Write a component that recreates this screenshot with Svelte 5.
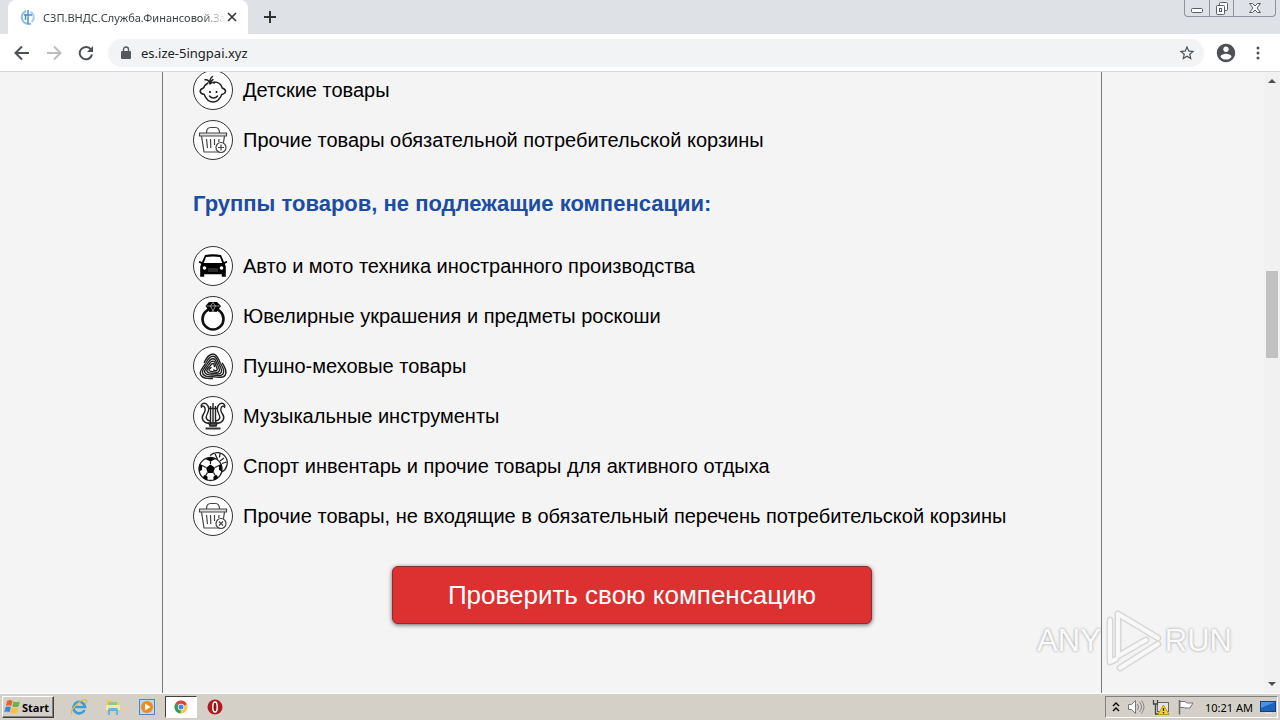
<script>
    let url = $state('es.ize-5ingpai.xyz');

    const included = [
        { icon: 'baby', label: 'Детские товары' },
        { icon: 'basket-plus', label: 'Прочие товары обязательной потребительской корзины' }
    ];

    const excluded = [
        { icon: 'car', label: 'Авто и мото техника иностранного производства' },
        { icon: 'ring', label: 'Ювелирные украшения и предметы роскоши' },
        { icon: 'wool', label: 'Пушно-меховые товары' },
        { icon: 'lyre', label: 'Музыкальные инструменты' },
        { icon: 'ball', label: 'Спорт инвентарь и прочие товары для активного отдыха' },
        { icon: 'basket-cross', label: 'Прочие товары, не входящие в обязательный перечень потребительской корзины' }
    ];

    // one third of the wool skein, repeated three times around the centre
    const turns = [0, 120, 240];
    const strands = [10.4, 8.7, 7, 5.3, 3.6].map(strand);

    function strand(r) {
        const end = r - 1.7;
        const top = 22.5 - r * 1.4;
        const x1 = 20 - 0.87 * r;
        const y1 = 22 - 0.5 * r;
        const x2 = 20 + 0.87 * end;
        const y2 = 22 - 0.5 * end;
        const k = r * 0.45;
        return `M${x1} ${y1}C${x1 + k * 0.5} ${y1 - k * 0.87} ${20 - k} ${top} 20 ${top}S${x2 - k * 0.5} ${y2 - k * 0.87} ${x2} ${y2}`;
    }
</script>

{#snippet goodsIcon(name)}
    <svg class="goods-icon" viewBox="0 0 40 40" aria-hidden="true">
        <circle cx="20" cy="20" r="19.5" fill="#fff" stroke="#333" />
        {#if name === 'baby'}
            <g fill="none" stroke="#222" stroke-width="1.5" stroke-linecap="round">
                <path d="M15 13c-2.5 1.5-4 3-4.500 5-1.500.5-3.500 2-3.300 3.500.3 1.500 2 2.500 4 3 1.800 4.500 4.800 7.500 8.800 7.500s7-3 8.800-7.500c2-.5 3.500-1.500 3.700-3 .2-1.500-1.800-3-3.300-3.500-1-4-4.500-6-8.200-6" />
                <path d="M17 14c-.5-3-2-4.500-5-4.200M17 14c-.5-3 .5-6 2.500-7.500M17 14c.5-2.500 1-3.500 3-4.500M17.500 13.500c1-1 3-1 4-.5" />
                <path d="M16.500 26c2 2.600 6 2.600 8 0" />
            </g>
            <circle cx="17" cy="22" r="1" />
            <circle cx="23.5" cy="22" r="1" />
        {:else if name === 'car'}
            <path d="M12 9q8-1.500 16 0l3 7 2.500-1q1.500 1 0 2l-1.700.7 1 3v10h-4v-2.500H11.200v2.500h-4v-10l1-3-1.700-.7q-1.500-1 0-2L9 16z" />
            <path d="M13 11q7-1 14 0l2.300 6H10.700z" fill="#fff" />
            <circle cx="11.5" cy="22" r="1.8" fill="#fff" />
            <circle cx="28.5" cy="22" r="1.8" fill="#fff" />
            <path d="M15 23h10M15 25h10" stroke="#555" />
        {:else if name === 'ring'}
            <circle cx="20" cy="23" r="10.5" fill="none" stroke="#111" stroke-width="2.6" />
            <path d="M16 6h8l4 4-4.500 6q-3.500-1-7 0L12.500 10z" />
            <path d="M13.500 10h13M17.500 10l2.500 5 2.500-5L20 6.500z" fill="none" stroke="#ccc" stroke-width=".7" />
        {:else if name === 'wool'}
            {#each turns as turn}
                <g transform="rotate({turn} 20 22)" fill="none" stroke="#222" stroke-width="1.4">
                    {#each strands as d}
                        <path {d} />
                    {/each}
                </g>
            {/each}
        {:else if name === 'lyre'}
            <g fill="none" stroke="#222" stroke-width="1.4">
                <path d="M16 27.500c-6-1-8.500-5-5.500-9.500 2-3 2.300-5.500.5-7.500-1.500-1-3 0-2.500 1.500M24 27.500c6-1 8.500-5 5.500-9.500-2-3-2.300-5.500-.5-7.500 1.500-1 3 0 2.500 1.500" />
                <path d="M17 25c-3.500-.6-4.800-3.500-3-6.500 2.500-4.500 2.200-8-.5-10.500-3-1.700-5.500-.2-5.500 2.500M23 25c3.500-.6 4.800-3.500 3-6.500-2.500-4.500-2.200-8 .5-10.500 3-1.700 5.500-.2 5.500 2.500" />
                <path d="M15 12.500h10M17.500 10v17M20 7v20M22.500 10v17" />
                <path d="M16 27h8l-1 3h-6z" fill="#555" />
            </g>
            <path d="M12.500 31.500h15v2h-15z" fill="#333" />
        {:else if name === 'ball'}
            <g fill="none" stroke="#222" stroke-width="1.3">
                <path d="M17 9.500c5-4.500 12-3.500 15.500 1.500s1.500 12-3.500 15" />
                <path d="M22 8l2.500 5M27 7.500l-.5 4M31 12l-4 3M33.500 16l-4.500 1.500" />
                <circle cx="17.5" cy="23" r="11.5" fill="#fff" />
                <path d="M17.500 18v-4M13 21.500l-4-2M22 21.500l4-2M14.500 26.500l-2 3.500M20.500 26.500l2 3.500" />
            </g>
            <path d="M17.500 18.500l4.500 3.300-1.800 5.200h-5.400L13 21.800zM12.500 13l5-1.500 5 1.500-5 2.500zM6.500 18l2.700 1-.2 5-3 1.500zM28.500 18l-2.700 1 .2 5 3 1.500zM11 29l3.500 1.500v4L10 32zM24 29l-3.500 1.500v4L25 32z" />
        {:else}
            <g fill="none" stroke="#444" stroke-width="1.2" stroke-linejoin="round">
                <path d="M6.500 13h27v3h-27z" fill="#ddd" />
                <path d="M8.500 16l2.500 16h18l2.500-16" />
                <path d="M13.500 13c0-4 1-5.500 4-5.500h5c3 0 4 1.500 4 5.500" />
                <path d="M13.500 19l1 9M17.500 19l.3 9M21.500 19v6M26 19l-.3 3" />
                <circle cx="28" cy="27.5" r="5" fill="#fff" />
                {#if name === 'basket-plus'}
                    <path d="M28 24.500v6M25 27.500h6" />
                {:else}
                    <path d="M26 25.500l4 4M30 25.500l-4 4" />
                {/if}
            </g>
        {/if}
    </svg>
{/snippet}

{#snippet goodsList(items)}
    <ul class="goods">
        {#each items as item}
            <li>
                {@render goodsIcon(item.icon)}
                <span>{item.label}</span>
            </li>
        {/each}
    </ul>
{/snippet}

<div class="desktop">
    <header class="tabstrip">
        <div class="tab">
            <svg class="favicon" viewBox="0 0 16 16" aria-hidden="true">
                <path d="M6 2a6.500 6.500 0 1 0 5 12.500" fill="none" stroke="#8dbbe8" stroke-width="2" />
                <path d="M10.500 3a6 6 0 0 1 1 10" fill="none" stroke="#a9cdf0" stroke-width="2" />
                <path d="M8 1v14M5.500 5v6M4 6h8" stroke="#4a90d9" stroke-width="1.5" />
            </svg>
            <span class="tab-title">СЗП.ВНДС.Служба.Финансовой.За</span>
            <button class="tab-close" aria-label="Close tab">
                <svg width="10" height="10" viewBox="0 0 10 10"><path d="M1 1l8 8M9 1l-8 8" stroke="#333" stroke-width="1.6" /></svg>
            </button>
        </div>
        <button class="new-tab" aria-label="New tab">
            <svg width="12" height="12" viewBox="0 0 12 12"><path d="M6 0v12M0 6h12" stroke="#333" stroke-width="2" /></svg>
        </button>
        <div class="caption">
            <button aria-label="Minimize">
                <svg width="14" height="16" viewBox="0 0 14 16"><rect x="1.5" y="8.5" width="11" height="4" rx="1" fill="#fff" stroke="#5a5e68" /></svg>
            </button>
            <button aria-label="Restore">
                <svg width="14" height="16" viewBox="0 0 14 16" fill="#fff" stroke="#5a5e68"><rect x="4.5" y="2.5" width="8" height="8" rx="1" /><rect x="1.5" y="5.5" width="8" height="9" rx="1" /><rect x="4.5" y="8.5" width="2" height="3" /></svg>
            </button>
            <button class="wide" aria-label="Close">
                <svg width="14" height="16" viewBox="0 0 14 16"><path d="M1.500 3.500h3L7 6l2.500-2.500h3L9 8l3.500 4.500h-3L7 10l-2.500 2.500h-3L5 8z" fill="#fff" stroke="#5a5e68" /></svg>
            </button>
        </div>
    </header>

    <nav class="toolbar">
        <button aria-label="Back">
            <svg width="16" height="16" viewBox="0 0 16 16" fill="none" stroke="#4d5156" stroke-width="2"><path d="M15 8H2M8 1.500L1.500 8 8 14.500" /></svg>
        </button>
        <button aria-label="Forward" disabled>
            <svg width="16" height="16" viewBox="0 0 16 16" fill="none" stroke="#babcbe" stroke-width="2"><path d="M1 8h13M8 1.500L14.500 8 8 14.500" /></svg>
        </button>
        <button aria-label="Reload">
            <svg width="16" height="16" viewBox="0 0 16 16"><path d="M13 4.500A6.200 6.200 0 1 0 14 9.500" fill="none" stroke="#4d5156" stroke-width="2" /><path d="M15 1v6H9z" fill="#4d5156" /></svg>
        </button>
        <div class="omnibox">
            <svg width="10" height="14" viewBox="0 0 10 14" aria-hidden="true"><rect y="5" width="10" height="8" rx="1" fill="#55595e" /><path d="M2.500 5.500V3.500a2.500 2.500 0 0 1 5 0v2" fill="none" stroke="#55595e" stroke-width="1.4" /></svg>
            <input aria-label="Address" bind:value={url} />
            <button aria-label="Bookmark">
                <svg width="18" height="18" viewBox="0 0 24 24"><path d="M22 9.240l-7.190-.62L12 2 9.190 8.630 2 9.240l5.460 4.730L5.820 21 12 17.270 18.180 21l-1.630-7.030L22 9.240zM12 15.400l-3.760 2.270 1-4.280-3.320-2.880 4.380-.38L12 6.100l1.710 4.040 4.380.38-3.320 2.880 1 4.280L12 15.400z" fill="#4d5156" /></svg>
            </button>
        </div>
        <button aria-label="Profile">
            <svg width="22" height="22" viewBox="0 0 24 24"><path d="M12 2C6.480 2 2 6.480 2 12s4.480 10 10 10 10-4.480 10-10S17.520 2 12 2zm0 3c1.660 0 3 1.340 3 3s-1.340 3-3 3-3-1.340-3-3 1.340-3 3-3zm0 14.200c-2.500 0-4.710-1.280-6-3.220.03-1.990 4-3.080 6-3.080 1.990 0 5.970 1.090 6 3.080-1.290 1.940-3.500 3.220-6 3.220z" fill="#4d5156" /></svg>
        </button>
        <button aria-label="Menu">
            <svg width="4" height="14" viewBox="0 0 4 14" fill="#4d5156"><circle cx="2" cy="2" r="1.5" /><circle cx="2" cy="7" r="1.5" /><circle cx="2" cy="12" r="1.5" /></svg>
        </button>
    </nav>

    <div class="viewport">
        <main>
            {@render goodsList(included)}
            <h2>Группы товаров, не подлежащие компенсации:</h2>
            {@render goodsList(excluded)}
            <button class="check">Проверить свою компенсацию</button>
        </main>
        <div class="scrollbar">
            <svg width="8" height="4" viewBox="0 0 8 4" aria-hidden="true"><path d="M0 4l4-4 4 4z" fill="#505050" /></svg>
            <div class="track"><div class="thumb"></div></div>
            <svg width="8" height="4" viewBox="0 0 8 4" aria-hidden="true"><path d="M0 0l4 4 4-4z" fill="#505050" /></svg>
        </div>
        <div class="watermark">
            <span>ANY</span>
            <svg width="60" height="64" viewBox="0 0 60 64" fill="none" stroke-linejoin="round" stroke-linecap="round" aria-hidden="true">
                <path d="M7 11v42l6-3M15 5v42L43 31M15 5l40 24M17 59l38-24" stroke="#d8d8d8" stroke-width="7" />
                <path d="M7 11v42l6-3M15 5v42L43 31M15 5l40 24M17 59l38-24" stroke="#f8f8f8" stroke-width="4" />
            </svg>
            <span>RUN</span>
        </div>
    </div>

    <footer class="taskbar">
        <button class="start">
            <svg width="17" height="16" viewBox="0 0 16 14" aria-hidden="true">
                <path d="M3 1q3-1.500 5 .3L6.800 6.200Q4.500 4.800 1.800 6z" fill="#e8622c" />
                <path d="M9 1.800q3 1.200 6 0L13.800 6.600q-3 1-6 0z" fill="#6db33f" />
                <path d="M1.500 7q3-1 5 .3L5.300 12Q3 10.500.3 12z" fill="#3f83d6" />
                <path d="M7.500 7.800q3 1.200 6 0L12.300 12.500q-3 1.200-6 0z" fill="#f5c331" />
            </svg>
            Start
        </button>
        <div class="quick">
            <button aria-label="Internet Explorer">
                <svg width="18" height="18" viewBox="0 0 18 18" fill="none"><path d="M14.500 12A5.800 5.800 0 1 1 15 9H5" stroke="#37a0dc" stroke-width="2.6" /><path d="M2 16C-1 13 10 1 16 2q2 1-1 4" stroke="#e5b93a" stroke-width="1.3" /></svg>
            </button>
            <button aria-label="Explorer">
                <svg width="18" height="18" viewBox="0 0 18 18"><path d="M2 2h6l1 2h7v10H2z" fill="#e9cf6c" /><path d="M4 4h9v5H4z" fill="#8fc98b" /><path d="M2 7h14v5H2z" fill="#f7e9a5" /><path d="M4 17v-5q0-2 2-2h6q2 0 2 2v5h-2v-4H6v4z" fill="#69b4df" /></svg>
            </button>
            <button aria-label="Media Player">
                <svg width="18" height="18" viewBox="0 0 18 18"><rect x="1.5" y="1.5" width="15" height="15" fill="#b9d7f3" stroke="#4d87c7" /><circle cx="9" cy="9" r="6" fill="#f08a1c" /><path d="M7 5.500l5.500 3.500L7 12.500z" fill="#fff" /></svg>
            </button>
            <button class="active" aria-label="Chrome">
                <svg width="14" height="14" viewBox="0 0 14 14"><circle cx="7" cy="7" r="6.5" fill="#f6c944" /><path d="M7 7L1.300 3.800A6.500 6.500 0 0 1 12.900 4.200z" fill="#dc4437" /><path d="M7 7L1.300 3.800A6.500 6.500 0 0 0 6.500 13.500z" fill="#2f9e58" /><circle cx="7" cy="7" r="3.2" fill="#fff" /><circle cx="7" cy="7" r="2.5" fill="#4285f4" /></svg>
            </button>
            <button aria-label="Opera">
                <svg width="16" height="16" viewBox="0 0 16 16"><circle cx="8" cy="8" r="7.5" fill="#b3161b" /><ellipse cx="8" cy="8" rx="2.2" ry="5" fill="#8c1014" stroke="#fff" stroke-width="1.5" /></svg>
            </button>
        </div>
        <div class="tray">
            <svg width="8" height="10" viewBox="0 0 8 10" fill="none" stroke="#000" stroke-width="1.4" aria-hidden="true"><path d="M1 4l3-3 3 3M1 9l3-3 3 3" /></svg>
            <svg width="18" height="16" viewBox="0 0 18 16" aria-hidden="true"><path d="M1.500 5.500h3l4-4v13l-4-4h-3z" fill="#fff" stroke="#777" /><path d="M10.500 5q2 3 0 6M12.500 3q4 5 0 10M14.500 1.500q5 6.500 0 13" fill="none" stroke="#888" /></svg>
            <svg width="18" height="16" viewBox="0 0 18 16" aria-hidden="true"><rect x="5.5" y="3.5" width="11" height="9" fill="#e4e4e4" stroke="#666" /><path d="M1.500 1v4h4V1M3.500 5v10h4" fill="none" stroke="#444" stroke-width="1.3" /><path d="M11.500 6l5.500 9.500H6z" fill="#f6d420" stroke="#b79a10" /><path d="M11.500 9v3M11.500 13v1.500" stroke="#222" stroke-width="1.3" /></svg>
            <svg width="18" height="16" viewBox="0 0 18 16" aria-hidden="true"><path d="M2.500 1v14.500" stroke="#666" stroke-width="1.5" /><path d="M3 2.500h5l2 1.500h6l-3 5H8L7 8.500H3z" fill="#fff" stroke="#777" /></svg>
            <time>10:21 AM</time>
            <svg width="16" height="14" viewBox="0 0 16 14" aria-hidden="true"><rect x=".5" y="1.5" width="15" height="10" fill="#1d62bd" stroke="#17407a" /><path d="M1 2h14L1 8z" fill="#4b93e0" /><path d="M5 13h7" stroke="#ddd" stroke-width="2" /></svg>
        </div>
    </footer>
</div>

<style>
    :global(body) {
        margin: 0;
    }
    .desktop {
        display: flex;
        flex-direction: column;
        height: 100vh;
        overflow: hidden;
        font-family: "Liberation Sans", Arial, sans-serif;
        color: #000;
    }
    button {
        display: flex;
        align-items: center;
        justify-content: center;
        padding: 0;
        border: none;
        background: none;
        font-family: inherit;
        color: inherit;
        cursor: pointer;
    }
    svg {
        flex: none;
    }

    .tabstrip {
        display: flex;
        height: 34px;
        flex: none;
        padding: 0 4px 0 8px;
        background: #dee1e6;
    }
    .tab {
        display: flex;
        align-items: center;
        box-sizing: border-box;
        width: 240px;
        padding: 0 10px 0 12px;
        background: #fff;
        border-radius: 8px 8px 0 0;
    }
    .favicon {
        width: 16px;
        height: 16px;
        margin-right: 7px;
    }
    .tab-title {
        flex: 1;
        white-space: nowrap;
        font: 11px "Noto Sans", sans-serif;
        color: #3c4043;
        mask-image: linear-gradient(to left, transparent, #000 24px);
    }
    .tab-close {
        width: 12px;
        height: 16px;
    }
    .new-tab {
        width: 28px;
        margin-left: 8px;
    }
    .caption {
        display: flex;
        height: 16px;
        margin-left: auto;
        border: 1px solid #8d929c;
        border-top: none;
        border-radius: 0 0 4px 4px;
    }
    .caption button {
        width: 24px;
    }
    .caption button + button {
        border-left: 1px solid #8d929c;
    }
    .caption .wide {
        width: 42px;
    }

    .toolbar {
        display: flex;
        align-items: center;
        flex: none;
        height: 37px;
        padding: 0 6px;
        background: #fff;
        border-bottom: 1px solid #d5d7da;
    }
    .toolbar > button {
        width: 32px;
        height: 32px;
    }
    .omnibox {
        display: flex;
        align-items: center;
        flex: 1;
        height: 28px;
        margin: 0 6px;
        padding: 0 8px 0 13px;
        background: #f1f3f4;
        border-radius: 14px;
    }
    .omnibox input {
        flex: 1;
        min-width: 0;
        padding: 0 10px;
        border: none;
        outline: none;
        background: none;
        font: 13px "Noto Sans", sans-serif;
        color: #202124;
    }

    .viewport {
        position: relative;
        display: flex;
        flex: 1;
        min-height: 0;
        background: #f4f4f4;
        overflow: hidden;
    }
    main {
        box-sizing: border-box;
        width: 100%;
        max-width: 940px;
        margin: -2px auto 0;
        padding: 0 30px;
        border: 1px solid #777;
        border-width: 0 1px;
    }
    .goods {
        display: flex;
        flex-direction: column;
        gap: 10px;
        margin: 0;
        padding: 0;
        list-style: none;
    }
    .goods li {
        display: flex;
        align-items: center;
        gap: 10px;
        font-size: 20px;
        line-height: 24px;
    }
    .goods-icon {
        width: 40px;
        height: 40px;
    }
    h2 {
        margin: 30px 0 28px;
        font-size: 22px;
        line-height: 28px;
        color: #1c4ca3;
    }
    .check {
        width: 480px;
        max-width: 100%;
        height: 58px;
        margin: 30px auto;
        border: 1px solid #8f2a2e;
        border-radius: 6px;
        background: #dd3030;
        box-shadow: 0 1px 4px rgba(0, 0, 0, 0.6);
        font-size: 26px;
        color: #fff;
    }
    .scrollbar {
        display: flex;
        flex-direction: column;
        align-items: center;
        box-sizing: border-box;
        width: 16px;
        padding: 7px 0;
        background: #f1f1f1;
    }
    .track {
        flex: 1;
        width: 12px;
    }
    .thumb {
        height: 87px;
        margin-top: 188px;
        background: #c1c1c1;
    }
    .watermark {
        position: absolute;
        right: 48px;
        bottom: 20px;
        display: flex;
        align-items: center;
        gap: 2px;
        font: 31px "Liberation Sans", Arial, sans-serif;
        color: #fafafa;
        text-shadow: 0 0 3px #999;
        pointer-events: none;
    }

    .taskbar {
        display: flex;
        align-items: center;
        flex: none;
        height: 26px;
        padding: 0 2px;
        background: #d4d0c8;
        border-top: 1px solid #fff;
        box-shadow: 0 -1px #d4d0c8;
        font-family: "Noto Sans", sans-serif;
    }
    .start {
        gap: 1px;
        height: 22px;
        padding: 0 4px 0 1px;
        border: 1px solid;
        border-color: #fff #404040 #404040 #fff;
        box-shadow: inset -1px -1px #808080;
        font-size: 11px;
        font-weight: bold;
    }
    .quick {
        display: flex;
        margin-left: 9px;
        gap: 2px;
    }
    .quick button {
        box-sizing: border-box;
        width: 32px;
        height: 22px;
    }
    .quick .active {
        border: 1px solid;
        border-color: #404040 #fff #fff #404040;
        background: #fff;
    }
    .tray {
        display: flex;
        align-items: center;
        box-sizing: border-box;
        height: 22px;
        margin-left: auto;
        padding: 0 1px 0 6px;
        gap: 7px;
        border: 1px solid;
        border-color: #808080 #fff #fff #808080;
    }
    .tray time {
        margin-left: 3px;
        font-size: 11px;
    }
</style>
